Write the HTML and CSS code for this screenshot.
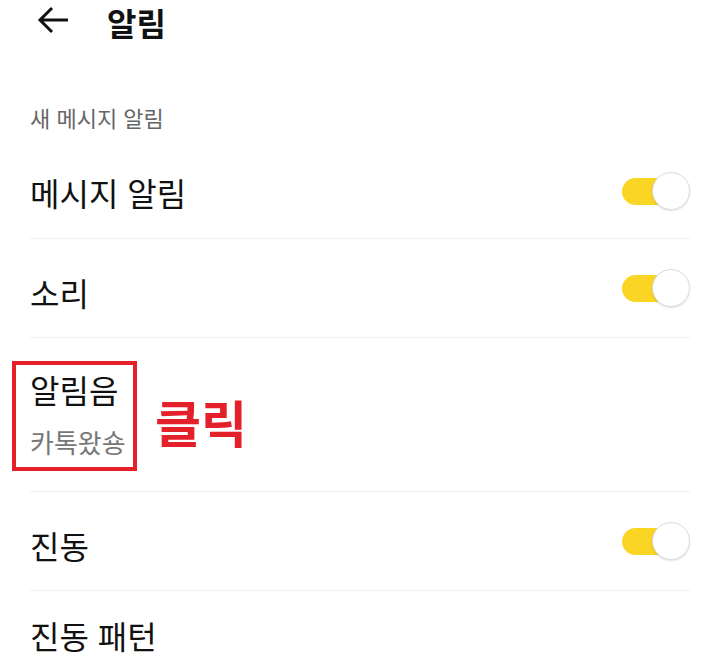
FILE: index.html
```html
<!DOCTYPE html>
<html lang="ko">
<head>
    <meta charset="UTF-8">
    <meta name="viewport" content="width=device-width, initial-scale=1.0">
    <title>알림</title>
    <link rel="stylesheet" href="styles.css">
</head>
<body>
    <div class="header">
        <svg class="back" width="32" height="30" viewBox="0 0 32 30">
            <path d="M31 15H3M15 3L3 15L15 27" fill="none" stroke="#111" stroke-width="3"/>
        </svg>
        <h1>알림</h1>
    </div>

    <div class="section-label">새 메시지 알림</div>

    <div class="list">
        <div class="row first">
            <span class="title">메시지 알림</span>
            <span class="toggle"><span class="knob"></span></span>
        </div>
        <div class="row">
            <span class="title">소리</span>
            <span class="toggle"><span class="knob"></span></span>
        </div>
        <div class="row tall">
            <div class="text-block">
                <span class="title">알림음</span>
                <span class="sub">카톡왔숑</span>
                <span class="mark"></span>
                <span class="click">클릭</span>
            </div>
        </div>
        <div class="row">
            <span class="title">진동</span>
            <span class="toggle"><span class="knob"></span></span>
        </div>
        <div class="row last">
            <span class="title">진동 패턴</span>
        </div>
    </div>
</body>
</html>
```

FILE: styles.css
```css
body {
    margin: 0;
    background: #ffffff;
    color: #111111;
    font-family: "Noto Sans CJK KR", "Noto Sans", sans-serif;
    overflow: hidden;
}
.header {
    display: flex;
    align-items: center;
    height: 44px;
    padding-left: 37px;
}
.back {
    display: block;
    margin-top: -4px;
}
.header h1 {
    margin: 0 0 0 38px;
    font-size: 32px;
    font-weight: 700;
    line-height: 44px;
}
.section-label {
    margin-top: 58px;
    padding-left: 30px;
    font-size: 22px;
    line-height: 30px;
    color: #666666;
}
.list {
    padding: 0 30px;
}
.row {
    display: flex;
    align-items: center;
    justify-content: space-between;
    height: 99px;
    box-sizing: border-box;
    border-bottom: 1px solid #f1f1f1;
}
.row.first {
    height: 107px;
}
.row.first .toggle {
    margin-top: 13px;
}
.row.tall {
    height: 154px;
    align-items: flex-start;
}
.row.last {
    height: 68px;
    align-items: flex-start;
    border-bottom: none;
}
.title {
    font-size: 32px;
    line-height: 36px;
    margin-top: 8px;
}
.row.first .title {
    margin-top: 14px;
}
.row.last .title {
    margin-top: 26px;
}
.toggle {
    position: relative;
    width: 56px;
    height: 27px;
    margin-right: 12px;
    border-radius: 14px;
    background: #fad524;
}
.knob {
    position: absolute;
    left: 30px;
    top: -6px;
    width: 36px;
    height: 36px;
    border-radius: 50%;
    background: #ffffff;
    border: 1px solid #dddddd;
    box-shadow: 0 1px 2px rgba(0, 0, 0, 0.12);
}
.text-block {
    position: relative;
    display: flex;
    flex-direction: column;
    margin-top: 33px;
}
.text-block .title {
    margin-top: 0;
}
.sub {
    margin-top: 20px;
    font-size: 26px;
    line-height: 30px;
    color: #777777;
}
.mark {
    position: absolute;
    left: -18px;
    top: -10px;
    width: 125px;
    height: 110px;
    box-sizing: border-box;
    border: 4px solid #e4202a;
}
.click {
    position: absolute;
    left: 125px;
    top: 20px;
    font-size: 50px;
    font-weight: 700;
    line-height: 60px;
    color: #e4202a;
    white-space: nowrap;
}
```
